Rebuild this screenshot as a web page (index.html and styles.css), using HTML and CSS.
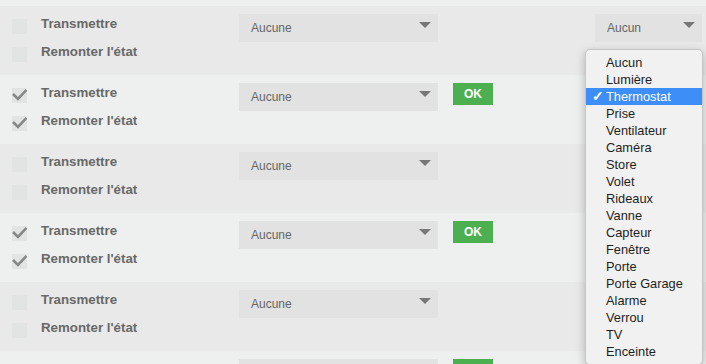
FILE: index.html
```html
<!DOCTYPE html>
<html lang="fr">
<head>
    <meta charset="UTF-8">
    <meta name="viewport" content="width=device-width, initial-scale=1.0">
    <title>Équipements</title>
    <link rel="stylesheet" href="styles.css">
</head>
<body>
    <div class="list">
        <div class="row">
            <div class="checks">
                <div class="check-line"><span class="box"></span><span class="label">Transmettre</span></div>
                <div class="check-line"><span class="box"></span><span class="label">Remonter l'état</span></div>
            </div>
            <div class="select wide"><span>Aucune</span><span class="arrow"></span></div>
            <div class="select type"><span>Aucun</span><span class="arrow"></span></div>
        </div>
        <div class="row">
            <div class="checks">
                <div class="check-line"><span class="box"><svg viewBox="0 0 15 15"><polyline points="1,6 6,11 14.5,2"/></svg></span><span class="label">Transmettre</span></div>
                <div class="check-line"><span class="box"><svg viewBox="0 0 15 15"><polyline points="1,6 6,11 14.5,2"/></svg></span><span class="label">Remonter l'état</span></div>
            </div>
            <div class="select wide"><span>Aucune</span><span class="arrow"></span></div>
            <button class="ok">OK</button>
        </div>
        <div class="row">
            <div class="checks">
                <div class="check-line"><span class="box"></span><span class="label">Transmettre</span></div>
                <div class="check-line"><span class="box"></span><span class="label">Remonter l'état</span></div>
            </div>
            <div class="select wide"><span>Aucune</span><span class="arrow"></span></div>
        </div>
        <div class="row">
            <div class="checks">
                <div class="check-line"><span class="box"><svg viewBox="0 0 15 15"><polyline points="1,6 6,11 14.5,2"/></svg></span><span class="label">Transmettre</span></div>
                <div class="check-line"><span class="box"><svg viewBox="0 0 15 15"><polyline points="1,6 6,11 14.5,2"/></svg></span><span class="label">Remonter l'état</span></div>
            </div>
            <div class="select wide"><span>Aucune</span><span class="arrow"></span></div>
            <button class="ok">OK</button>
        </div>
        <div class="row">
            <div class="checks">
                <div class="check-line"><span class="box"></span><span class="label">Transmettre</span></div>
                <div class="check-line"><span class="box"></span><span class="label">Remonter l'état</span></div>
            </div>
            <div class="select wide"><span>Aucune</span><span class="arrow"></span></div>
        </div>
        <div class="row">
            <div class="checks">
                <div class="check-line"><span class="box"><svg viewBox="0 0 15 15"><polyline points="1,6 6,11 14.5,2"/></svg></span><span class="label">Transmettre</span></div>
                <div class="check-line"><span class="box"><svg viewBox="0 0 15 15"><polyline points="1,6 6,11 14.5,2"/></svg></span><span class="label">Remonter l'état</span></div>
            </div>
            <div class="select wide"><span>Aucune</span><span class="arrow"></span></div>
            <button class="ok">OK</button>
        </div>
    </div>

    <ul class="menu">
        <li>Aucun</li>
        <li>Lumière</li>
        <li class="selected"><span class="tick">✓</span>Thermostat</li>
        <li>Prise</li>
        <li>Ventilateur</li>
        <li>Caméra</li>
        <li>Store</li>
        <li>Volet</li>
        <li>Rideaux</li>
        <li>Vanne</li>
        <li>Capteur</li>
        <li>Fenêtre</li>
        <li>Porte</li>
        <li>Porte Garage</li>
        <li>Alarme</li>
        <li>Verrou</li>
        <li>TV</li>
        <li>Enceinte</li>
    </ul>
</body>
</html>
```

FILE: styles.css
```css
html, body {
    height: 100%;
    overflow: hidden;
}
body {
    margin: 0;
    padding-top: 6px;
    box-sizing: border-box;
    background: #eef0ef;
    font-family: 'Liberation Sans', Arial, sans-serif;
    color: #666;
    position: relative;
}
.row {
    display: flex;
    align-items: flex-start;
    height: 69px;
    padding-right: 4px;
}
.row:nth-child(odd) {
    background: #e9e9ea;
}
.checks {
    width: 239px;
    box-sizing: border-box;
    padding: 11px 0 0 12px;
    flex-shrink: 0;
}
.check-line {
    display: flex;
    align-items: flex-start;
    height: 28px;
}
.box {
    width: 15px;
    height: 15px;
    margin-top: 2px;
    background: #e2e3e3;
    flex-shrink: 0;
}
.box svg {
    display: block;
    width: 15px;
    height: 15px;
    fill: none;
    stroke: #878787;
    stroke-width: 2.6;
}
.label {
    margin-left: 14px;
    font-size: 13.3px;
    line-height: 13px;
    font-weight: bold;
    color: #686868;
}
.select {
    margin-top: 8px;
    height: 28px;
    background: #e1e2e1;
    display: flex;
    align-items: center;
    justify-content: space-between;
    box-sizing: border-box;
    padding: 0 7px 0 12px;
    font-size: 12px;
    color: #666;
}
.select.wide {
    width: 199px;
}
.select.type {
    width: 107px;
    margin-left: auto;
}
.arrow {
    width: 0;
    height: 0;
    margin-top: -6px;
    border-left: 6px solid transparent;
    border-right: 6px solid transparent;
    border-top: 6px solid #777;
}
.ok {
    margin: 8px 0 0 15px;
    width: 40px;
    height: 22px;
    padding: 0;
    border: none;
    background: #4caf50;
    color: #fff;
    font-family: 'Liberation Sans', Arial, sans-serif;
    font-size: 12px;
    font-weight: bold;
}
.menu {
    position: absolute;
    left: 585px;
    top: 49px;
    width: 118px;
    margin: 0;
    padding: 4px 0;
    list-style: none;
    background: #f1f1f1;
    border: 1px solid #c6c6c6;
    border-radius: 5px;
    box-sizing: border-box;
    box-shadow: 0 3px 10px rgba(0, 0, 0, 0.25);
    font-size: 12.8px;
    color: #1e1e1e;
}
.menu li {
    height: 17px;
    line-height: 17px;
    padding-left: 20px;
    position: relative;
}
.menu li.selected {
    background: #3d8ef7;
    color: #fff;
}
.tick {
    position: absolute;
    left: 6px;
    font-size: 14px;
    font-weight: bold;
}
```
